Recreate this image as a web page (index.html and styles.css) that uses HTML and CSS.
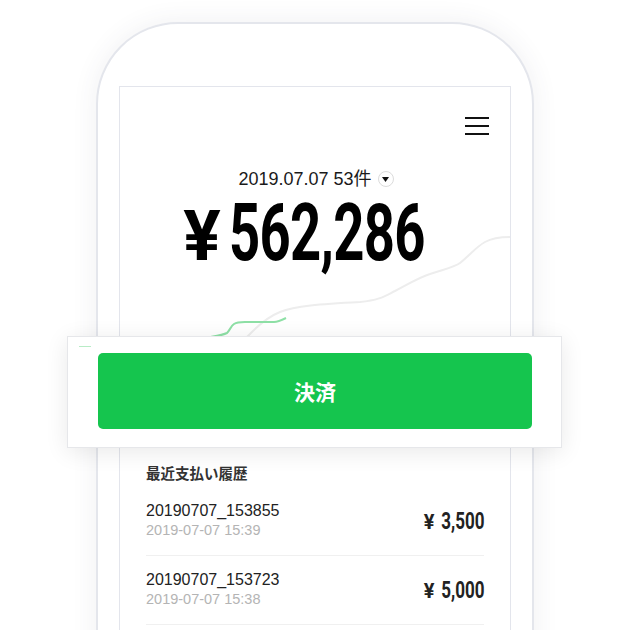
FILE: index.html
```html
<!DOCTYPE html>
<html lang="ja">
<head>
<meta charset="utf-8">
<link rel="stylesheet" href="styles.css">
</head>
<body>
<div class="stage">
  <div class="phone">
    <div class="screen">
      <div class="summary">
        <svg class="chart" width="390" height="369" viewBox="0 0 390 369">
          <path d="M60 300 C 90 290, 110 270, 127 250 C 140 236, 150 229, 160 225 C 175 219, 200 217, 240 215 C 260 213, 265 209, 275 204 C 290 196, 300 190, 310 187 C 325 182, 335 180, 340 176 C 350 168, 356 160, 365 155 C 372 151, 378 150, 390 150" fill="none" stroke="#ededed" stroke-width="2"/>
          <path d="M90 250 C 96 249, 103 248, 107 246 C 110 243, 111 239, 114 237 C 117 235, 120 235, 125 235 L 154 235 C 158 235, 162 233, 166 231" fill="none" stroke="#8ee0a6" stroke-width="2"/>
        </svg>
        <div class="topbar">
          <svg class="menu" width="24" height="18" viewBox="0 0 24 18">
            <path d="M0 1H24M0 9H24M0 17H24" stroke="#111" stroke-width="2"/>
          </svg>
        </div>
        <div class="date-row">
          <span class="date-text">2019.07.07 53件</span>
          <span class="drop"><svg width="7" height="5" viewBox="0 0 7 5"><path d="M0 0H7L3.5 5Z" fill="#111"/></svg></span>
        </div>
        <div class="total"><span class="yen">¥</span><span class="total-num">562,286</span></div>
      </div>
      <div class="history">
        <div class="history-title">最近支払い履歴</div>
        <div class="row">
          <div class="row-info">
            <div class="row-name">20190707_153855</div>
            <div class="row-time">2019-07-07 15:39</div>
          </div>
          <div class="row-amount"><span class="yen-s">¥</span><span class="amt">3,500</span></div>
        </div>
        <div class="row">
          <div class="row-info">
            <div class="row-name">20190707_153723</div>
            <div class="row-time">2019-07-07 15:38</div>
          </div>
          <div class="row-amount"><span class="yen-s">¥</span><span class="amt">5,000</span></div>
        </div>
      </div>
    </div>
  </div>
  <div class="pay-card">
    <span class="dash"></span>
    <button class="pay-btn">決済</button>
  </div>
</div>
</body>
</html>
```
FILE: styles.css
```css
html, body {
  margin: 0;
  padding: 0;
  background: #fff;
}
body {
  width: 630px;
  height: 630px;
  overflow: hidden;
  font-family: "Liberation Sans", "Noto Sans CJK JP", sans-serif;
}
.stage {
  position: relative;
  width: 630px;
  height: 630px;
  overflow: hidden;
}
.phone {
  box-sizing: border-box;
  width: 438px;
  height: 720px;
  margin: 22px 0 0 96px;
  padding: 62px 21px 0;
  border: 2px solid #e4e6ec;
  border-radius: 82px 82px 0 0;
  background: #fff;
  box-shadow: 0 0 26px rgba(60, 70, 90, 0.08);
}
.screen {
  box-sizing: border-box;
  width: 392px;
  height: 640px;
  border: 1px solid #e3e5ec;
  border-bottom: none;
  background: #fff;
}
.summary {
  position: relative;
  height: 369px;
  display: flex;
  flex-direction: column;
  align-items: center;
}
.chart {
  position: absolute;
  left: 0;
  top: 0;
}
.topbar {
  position: relative;
  align-self: stretch;
  display: flex;
  justify-content: flex-end;
  padding: 30px 21px 0 0;
}
.menu {
  display: block;
}
.date-row {
  position: relative;
  display: flex;
  align-items: center;
  gap: 6px;
  margin-top: 32px;
  height: 24px;
  margin-left: 2px;
}
.date-text {
  font-size: 18px;
  color: #1a1a1a;
  line-height: 24px;
}
.drop {
  box-sizing: border-box;
  width: 16px;
  height: 16px;
  border: 1px solid #dcdcdc;
  border-radius: 50%;
  display: flex;
  align-items: center;
  justify-content: center;
}
.drop svg {
  display: block;
}
.total {
  position: relative;
  margin-top: 12px;
  height: 60px;
  display: flex;
  align-items: baseline;
  justify-content: center;
  padding-right: 20px;
  font-family: "Roboto", "Liberation Sans", sans-serif;
  font-weight: 700;
  color: #000;
}
.yen {
  font-size: 70px;
  line-height: 60px;
  margin-right: 8px;
}
.total-num {
  display: inline-block;
  font-size: 80px;
  line-height: 60px;
  letter-spacing: -1px;
  transform: scaleX(0.68);
  transform-origin: left center;
  margin-right: -90px;
}
.history {
  padding: 0 26px;
}
.history-title {
  margin-top: 8px;
  margin-bottom: 3px;
  font-size: 14.5px;
  line-height: 20px;
  font-weight: 700;
  color: #333;
}
.row {
  display: flex;
  align-items: center;
  justify-content: space-between;
  padding: 14px 0 16px;
  border-bottom: 1px solid #f0f0f0;
}
.row-name {
  font-size: 16px;
  line-height: 20px;
  color: #222;
}
.row-time {
  font-size: 14.5px;
  line-height: 18px;
  color: #b4b4b4;
}
.row-amount {
  display: flex;
  align-items: baseline;
  justify-content: flex-end;
  padding-top: 4px;
  font-family: "Roboto", "Liberation Sans", sans-serif;
  font-weight: 700;
  color: #222;
}
.yen-s {
  font-size: 20px;
  line-height: 24px;
  margin-right: 6px;
}
.amt {
  display: inline-block;
  font-size: 23px;
  line-height: 24px;
  transform: scaleX(0.74);
  transform-origin: right center;
  margin-left: -15px;
}
.pay-card {
  position: absolute;
  left: 67px;
  top: 336px;
  box-sizing: border-box;
  width: 495px;
  height: 112px;
  padding: 16px 29px 18px 30px;
  background: #fff;
  border: 1px solid #e6e7ea;
  box-shadow: 0 4px 22px rgba(0, 0, 0, 0.09);
}
.dash {
  position: absolute;
  left: 11px;
  top: 9px;
  width: 12px;
  height: 1px;
  background: #b8ecc6;
}
.pay-btn {
  display: block;
  width: 434px;
  height: 76px;
  border: none;
  border-radius: 5px;
  background: #15c54e;
  color: #fff;
  font-family: "Noto Sans CJK JP", sans-serif;
  font-weight: 700;
  font-size: 21px;
  padding: 0;
}
```
